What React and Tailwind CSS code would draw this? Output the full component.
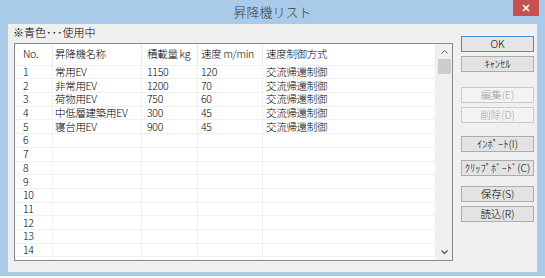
const rows = [
  ["1", "常用EV", "1150", "120", "交流帰還制御"],
  ["2", "非常用EV", "1200", "70", "交流帰還制御"],
  ["3", "荷物用EV", "750", "60", "交流帰還制御"],
  ["4", "中低層建築用EV", "300", "45", "交流帰還制御"],
  ["5", "寝台用EV", "900", "45", "交流帰還制御"],
];

const cols = ["w-[38px] pl-[8px]", "w-[89px] pl-[2px]", "w-[56px] pl-[5px]", "w-[65px] pl-[3px]", "w-[173px] pl-[3px]"];

function Button({ children, primary = false, disabled = false }) {
  return (
    <div
      className={
        "h-[16px] w-[73px] flex items-center justify-center border text-[10.5px] font-light leading-none whitespace-nowrap " +
        (primary
          ? "border-[#3c8ee0] bg-[#e5e5e5] text-black"
          : disabled
          ? "border-[#cacaca] bg-[#f3f3f3] text-[#a3a3a3]"
          : "border-[#acacac] bg-[#e3e3e3] text-black")
      }
    >
      {children}
    </div>
  );
}

export default function App() {
  const all = [];
  for (let i = 0; i < 15; i++) {
    all.push(rows[i] || [i < 14 ? String(i + 1) : "", "", "", "", ""]);
  }
  return (
    <div
      className="w-[545px] h-[278px] bg-white"
      style={{ fontFamily: '"Noto Sans CJK JP", "Liberation Sans", sans-serif' }}
    >
      <div className="w-[545px] h-[276px] bg-[#a9cbe9] flex flex-col">
        <div className="h-[24px] relative flex items-center justify-center">
          <span className="text-[13px] font-light text-[#3a3a3a]">昇降機リスト</span>
          <div className="absolute right-[6px] top-0 w-[26px] h-[16px] bg-[#c75050] flex items-center justify-center">
            <svg width="8" height="8" viewBox="0 0 8 8">
              <path d="M1 1 L7 7 M7 1 L1 7" stroke="white" strokeWidth="1.6" />
            </svg>
          </div>
        </div>
        <div className="mx-[8px] h-[248px] bg-[#f0f0f0] flex">
          <div className="pl-[5px] flex flex-col">
            <div className="h-[19px] pt-[1px] text-[11px] font-light leading-[14px] text-black">※青色･･･使用中</div>
            <div className="ml-px w-[439px] h-[218px] border border-[#828790] bg-white flex overflow-hidden">
              <div className="flex flex-col">
                <div className="h-[21.7px] flex shrink-0 border-b border-[#f0f0f0]">
                  {["No.", "昇降機名称", "積載量 kg", "速度 m/min", "速度制御方式"].map((h, i) => (
                    <div key={i} className={cols[i] + " border-r border-[#e3ecf6] flex items-center text-[10.5px] font-light leading-[12px] tracking-[-0.3px] text-black whitespace-nowrap"}>
                      {h}
                    </div>
                  ))}
                </div>
                {all.map((r, ri) => (
                  <div key={ri} className="h-[13.7px] flex shrink-0 border-b border-[#f0f0f0]">
                    {r.map((c, ci) => (
                      <div key={ci} className={cols[ci] + " border-r border-[#f0f0f0] flex items-center text-[10.5px] font-light leading-[12px] tracking-[-0.3px] text-black whitespace-nowrap"}>
                        {c}
                      </div>
                    ))}
                  </div>
                ))}
              </div>
              <div className="w-[17px] bg-[#f0f0f0] flex flex-col items-center">
                <div className="h-[15px] flex items-center justify-center">
                  <svg width="7" height="4" viewBox="0 0 7 4">
                    <path d="M0.5 3.5 L3.5 0.5 L6.5 3.5" fill="none" stroke="#606060" strokeWidth="1" />
                  </svg>
                </div>
                <div className="w-[13px] h-[15px] bg-[#cdcdcd]" />
                <div className="flex-1" />
                <div className="h-[15px] flex items-center justify-center">
                  <svg width="7" height="5" viewBox="0 0 7 5">
                    <path d="M0.5 0.5 L3.5 3.5 L6.5 0.5" fill="none" stroke="#606060" strokeWidth="1.5" />
                  </svg>
                </div>
              </div>
            </div>
          </div>
          <div className="ml-[8px] pt-[12px] flex flex-col">
            <Button primary>OK</Button>
            <div className="h-[4px]" />
            <Button>ｷｬﾝｾﾙ</Button>
            <div className="h-[15px]" />
            <Button disabled>編集(E)</Button>
            <div className="h-[4px]" />
            <Button disabled>削除(D)</Button>
            <div className="h-[13px]" />
            <Button>ｲﾝﾎﾟｰﾄ(I)</Button>
            <div className="h-[8px]" />
            <Button>ｸﾘｯﾌﾟﾎﾞｰﾄﾞ(C)</Button>
            <div className="h-[10px]" />
            <Button>保存(S)</Button>
            <div className="h-[4px]" />
            <Button>読込(R)</Button>
          </div>
        </div>
      </div>
    </div>
  );
}
